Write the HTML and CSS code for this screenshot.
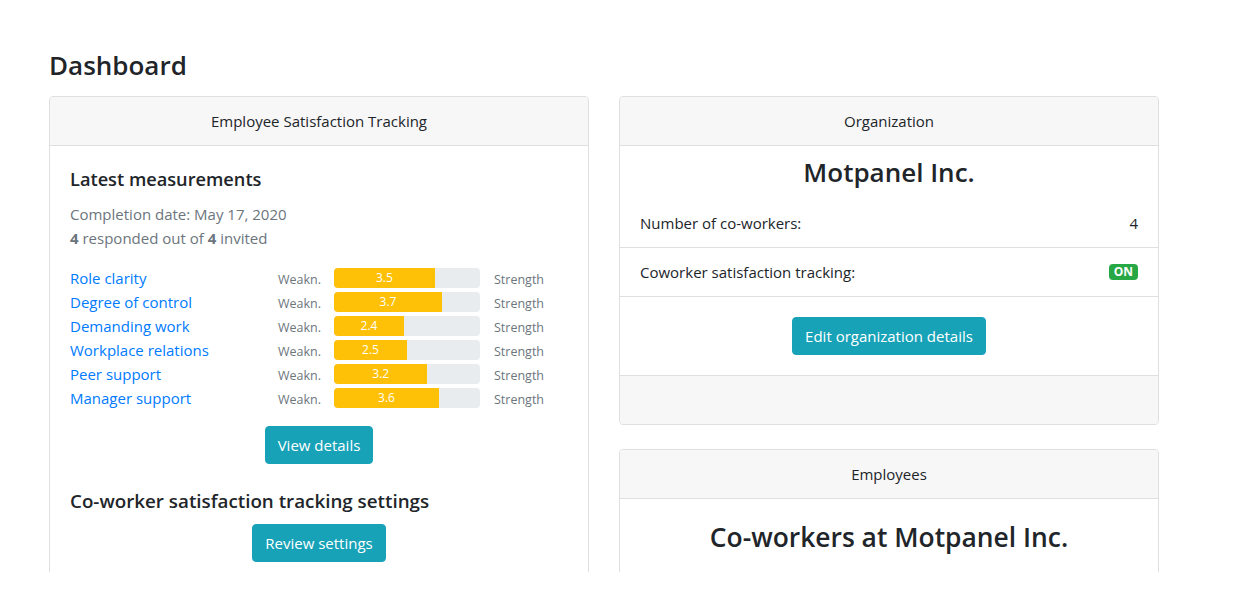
FILE: index.html
```html
<!DOCTYPE html>
<html lang="en">
<head>
<meta charset="utf-8">
<title>Dashboard</title>
<link rel="stylesheet" href="styles.css">
</head>
<body>
<div class="viewport">
  <main class="page">
    <h1 class="page-title">Dashboard</h1>
    <div class="columns">
      <section class="card">
        <header class="card-header">Employee Satisfaction Tracking</header>
        <div class="card-body">
          <h5 class="section-title">Latest measurements</h5>
          <p class="meta">Completion date: May 17, 2020<br><b>4</b> responded out of <b>4</b> invited</p>
          <div class="scores">
            <div class="score-row">
              <a href="#" class="score-link">Role clarity</a>
              <span class="scale">Weakn.</span>
              <div class="bar"><div class="bar-fill" style="width:69%">3.5</div></div>
              <span class="scale scale-end">Strength</span>
            </div>
            <div class="score-row">
              <a href="#" class="score-link">Degree of control</a>
              <span class="scale">Weakn.</span>
              <div class="bar"><div class="bar-fill" style="width:74%">3.7</div></div>
              <span class="scale scale-end">Strength</span>
            </div>
            <div class="score-row">
              <a href="#" class="score-link">Demanding work</a>
              <span class="scale">Weakn.</span>
              <div class="bar"><div class="bar-fill" style="width:48%">2.4</div></div>
              <span class="scale scale-end">Strength</span>
            </div>
            <div class="score-row">
              <a href="#" class="score-link">Workplace relations</a>
              <span class="scale">Weakn.</span>
              <div class="bar"><div class="bar-fill" style="width:50%">2.5</div></div>
              <span class="scale scale-end">Strength</span>
            </div>
            <div class="score-row">
              <a href="#" class="score-link">Peer support</a>
              <span class="scale">Weakn.</span>
              <div class="bar"><div class="bar-fill" style="width:64%">3.2</div></div>
              <span class="scale scale-end">Strength</span>
            </div>
            <div class="score-row">
              <a href="#" class="score-link">Manager support</a>
              <span class="scale">Weakn.</span>
              <div class="bar"><div class="bar-fill" style="width:72%">3.6</div></div>
              <span class="scale scale-end">Strength</span>
            </div>
          </div>
          <div class="center first-btn"><a href="#" class="btn">View details</a></div>
          <h5 class="section-title settings-title">Co-worker satisfaction tracking settings</h5>
          <div class="center second-btn"><a href="#" class="btn">Review settings</a></div>
        </div>
      </section>

      <div class="stack">
        <section class="card">
          <header class="card-header">Organization</header>
          <h3 class="org-name">Motpanel Inc.</h3>
          <ul class="list">
            <li class="list-item"><span>Number of co-workers:</span><span>4</span></li>
            <li class="list-item"><span>Coworker satisfaction tracking:</span><span class="badge">ON</span></li>
          </ul>
          <div class="card-body center"><a href="#" class="btn">Edit organization details</a></div>
          <footer class="card-footer"></footer>
        </section>

        <section class="card">
          <header class="card-header">Employees</header>
          <div class="card-body">
            <h3 class="emp-title">Co-workers at Motpanel Inc.</h3>
          </div>
        </section>
      </div>
    </div>
  </main>
</div>
</body>
</html>
```

FILE: styles.css
```css
* { box-sizing: border-box; }

html, body {
  margin: 0;
  padding: 0;
  background: #fff;
}

body {
  font-family: "Open Sans", "Noto Sans", sans-serif;
  font-size: 16px;
  line-height: 1.5;
  color: #212529;
}

.viewport {
  height: 572px;
  overflow: hidden;
}

.page {
  padding: 49px 0 0 49px;
}

.page-title {
  margin: 0 0 13px;
  font-size: 26px;
  font-weight: 600;
  line-height: 1.3;
}

.columns {
  display: grid;
  grid-template-columns: 540px 540px;
  column-gap: 30px;
  align-items: start;
}

.stack {
  display: flex;
  flex-direction: column;
  gap: 24px;
}

.card {
  border: 1px solid #dfdfdf;
  border-radius: 4px;
  background: #fff;
  overflow: hidden;
}

.card-header {
  padding: 12px 20px;
  background: #f7f7f7;
  border-bottom: 1px solid #dfdfdf;
  text-align: center;
  font-size: 15px;
  line-height: 24px;
}

.card-body {
  padding: 20px;
}

.card-footer {
  height: 49px;
  background: #f7f7f7;
  border-top: 1px solid #dfdfdf;
}

.center { text-align: center; }

.section-title {
  margin: 1px 0 8px;
  font-size: 18.2px;
  font-weight: 600;
  line-height: 24px;
}

.meta {
  margin: 11px 0 16px;
  color: #6c757d;
  font-size: 15px;
  line-height: 24px;
}

.meta b { font-weight: 700; }

.score-row {
  display: grid;
  grid-template-columns: 208px 56px 146px auto;
  align-items: center;
  height: 24px;
}

.score-link {
  color: #007bff;
  text-decoration: none;
  font-size: 15px;
  padding-top: 1px;
}

.scale {
  font-size: 12.5px;
  line-height: 18px;
  padding-top: 5px;
  color: #6c757d;
}

.scale-end {
  padding-left: 14px;
}

.bar {
  height: 20px;
  background: #e9ecef;
  border-radius: 4px;
  overflow: hidden;
  display: flex;
}

.bar-fill {
  background: #ffc107;
  color: #fff;
  font-size: 12px;
  line-height: 20px;
  text-align: center;
}

.btn {
  display: inline-block;
  padding: 6px 12px;
  background: #17a2b8;
  border: 1px solid #17a2b8;
  border-radius: 4px;
  color: #fff;
  text-decoration: none;
  font-size: 15px;
  line-height: 24px;
}

.first-btn { margin-top: 16px; }

.settings-title {
  margin-top: 25px;
  margin-bottom: 11px;
  font-size: 18.8px;
}

.org-name {
  margin: 9px 0;
  text-align: center;
  font-size: 26px;
  font-weight: 600;
  line-height: 34px;
}

.list {
  list-style: none;
  margin: 0;
  padding: 0;
}

.list-item {
  display: flex;
  justify-content: space-between;
  align-items: center;
  padding: 12px 20px;
  border-top: 1px solid #dfdfdf;
  font-size: 15px;
  line-height: 24px;
}

.list-item:first-child {
  border-top: 1px solid transparent;
}

.list-item:last-child {
  border-bottom: 1px solid #dfdfdf;
}

.badge {
  display: inline-block;
  padding: 0 5px;
  margin-top: 1px;
  background: #28a745;
  color: #fff;
  font-size: 12px;
  font-weight: 700;
  line-height: 16px;
  border-radius: 4px;
}

.emp-title {
  margin: 1px 0 0;
  text-align: center;
  font-size: 26.4px;
  font-weight: 600;
  line-height: 34px;
}
```
